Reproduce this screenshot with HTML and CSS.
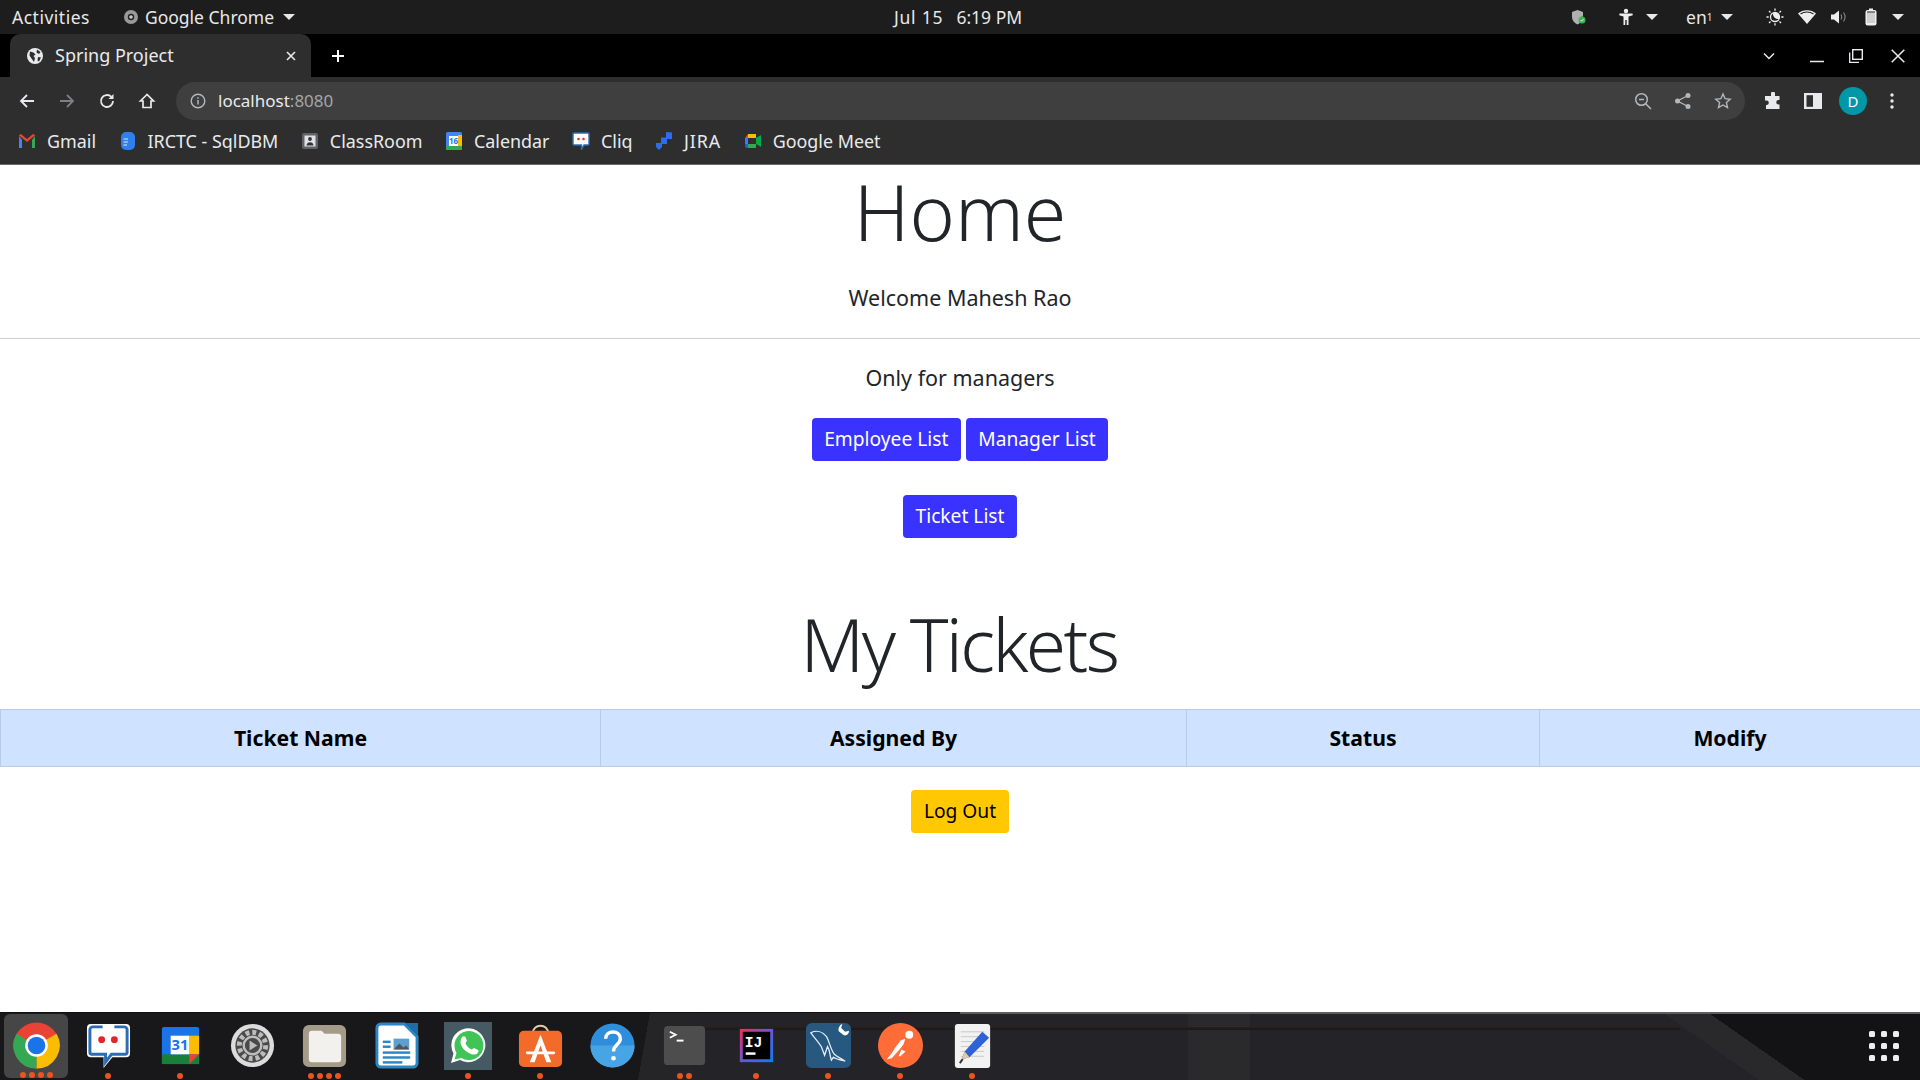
FILE: index.html
```html
<!DOCTYPE html>
<html lang="en">
<head>
<meta charset="utf-8">
<title>Spring Project</title>
<link rel="stylesheet" href="styles.css">
</head>
<body>
<header class="topbar">
  <div class="top-left">
    <span class="activities">Activities</span>
    <span class="app-menu">
      <svg class="i16" viewBox="0 0 16 16"><circle cx="8" cy="8" r="7" fill="#999"/><circle cx="8" cy="8" r="3.2" fill="#222"/><circle cx="8" cy="8" r="1.8" fill="#ccc"/></svg>
      Google Chrome <i class="caret"></i>
    </span>
  </div>
  <div class="top-clock"><span class="date">Jul 15</span><span>6:19 PM</span></div>
  <div class="top-right">
    <svg class="i16 shield" viewBox="0 0 16 16"><path d="M6.500 1l5.500 2v4.500a4 4 0 0 0-3 6.500l-2.500 1.500C3.500 14 1 11.500 1 8V3z" fill="#b0b0b0"/><circle cx="11" cy="11" r="3.500" fill="#3cb554"/><path d="M9.500 11l1.200 1.200 2-2.200" stroke="#fff" stroke-width=".8" fill="none"/></svg>
    <span class="tray-group access">
      <svg class="i18" viewBox="0 0 18 18"><circle cx="9" cy="3" r="2.200" fill="#eee"/><path d="M2.500 5.500h13l.3 1.800-4.300 1.200V17H9.700v-5H8.300v5H6.500V8.500L2.200 7.300z" fill="#eee"/></svg>
      <i class="caret"></i>
    </span>
    <span class="tray-group lang">en<sub>1</sub><i class="caret"></i></span>
    <span class="tray-group status">
      <svg class="i18" viewBox="0 0 18 18"><circle cx="9" cy="9" r="4.500" fill="none" stroke="#eee" stroke-width="1.300"/><path d="M7 5.200a4.500 4.500 0 0 1 6.300 5.500 5 5 0 0 1-6.300-5.500z" fill="#eee"/><path d="M9 .5v2.200M9 15.300v2.200M.5 9h2.200M15.300 9h2.200M3 3l1.500 1.500M13.500 13.500L15 15M3 15l1.500-1.500M13.500 4.500L15 3" stroke="#eee" stroke-width="1.300"/></svg>
      <svg class="i18" viewBox="0 0 18 18"><path d="M0 5.500C4.500 1 13.500 1 18 5.500L9 16z" fill="#eee"/><path d="M2.500 6C6 3.400 12 3.400 15.500 6" stroke="#222" stroke-width="1.100" fill="none"/></svg>
      <svg class="i18" viewBox="0 0 18 18"><path d="M1 6.500h3L9 2.500v13l-5-4H1z" fill="#eee"/><path d="M11 6.500c1 1.500 1 3.500 0 5M13.500 4.500c2 2.800 2 6.200 0 9" stroke="#8a8a8a" stroke-width="1.100" fill="none"/></svg>
      <svg class="i18" viewBox="0 0 18 18"><rect x="3.500" y="2" width="11" height="15.500" rx="2" fill="#eee"/><rect x="7" y="0.500" width="4" height="2" fill="#eee"/><rect x="5" y="3.500" width="8" height="11.500" fill="#cfcfcf"/><rect x="5" y="3.500" width="8" height="1" fill="#333"/></svg>
      <i class="caret"></i>
    </span>
  </div>
</header>

<div class="tabstrip">
  <div class="tab">
    <svg class="i16" viewBox="0 0 16 16"><circle cx="8" cy="8" r="8" fill="#e8eaed"/><path d="M3 3.500l3.500 1 2 2-2 1.500 1.500 2-1 4-2.500-3.500-2-3zM10 1.500l3.500 2.500-1.500 2-2.500-1.500zM11 9l3 .5-2 4-1.500-1z" fill="#2e2e2e"/></svg>
    <span class="tab-title">Spring Project</span>
    <svg class="i12" viewBox="0 0 12 12"><path d="M2 2l8 8M10 2l-8 8" stroke="#e8eaed" stroke-width="1.600"/></svg>
  </div>
  <svg class="i16 newtab" viewBox="0 0 16 16"><path d="M8 2v12M2 8h12" stroke="#fff" stroke-width="2"/></svg>
  <div class="win-controls">
    <svg class="i12 wc-chevron" viewBox="0 0 12 12"><path d="M1 3.500l5 5 5-5" stroke="#e8eaed" stroke-width="1.500" fill="none"/></svg>
    <svg class="i14" viewBox="0 0 14 14"><path d="M0 12.500h14" stroke="#e8eaed" stroke-width="1.500"/></svg>
    <svg class="i14" viewBox="0 0 14 14"><path d="M.7 3.500v9.800h9.300" stroke="#e8eaed" stroke-width="1.300" fill="none"/><rect x="3.700" y=".7" width="9.600" height="9.600" stroke="#e8eaed" stroke-width="1.400" fill="none"/></svg>
    <svg class="i14 wc-close" viewBox="0 0 14 14"><path d="M.7.7l12.600 12.600M13.300.7L.7 13.300" stroke="#e8eaed" stroke-width="1.500"/></svg>
  </div>
</div>

<nav class="toolbar">
  <div class="nav-buttons">
    <svg class="i18" viewBox="0 0 18 18"><path d="M16 9H3M9 3L3 9l6 6" stroke="#e8eaed" stroke-width="1.800" fill="none"/></svg>
    <svg class="i18" viewBox="0 0 18 18"><path d="M2 9h13M9 3l6 6-6 6" stroke="#7d7f82" stroke-width="1.800" fill="none"/></svg>
    <svg class="i18" viewBox="0 0 18 18"><path d="M15 9a6 6 0 1 1-1.800-4.300" stroke="#e8eaed" stroke-width="1.800" fill="none"/><path d="M15.500 2v5h-5z" fill="#e8eaed"/></svg>
    <svg class="i18" viewBox="0 0 18 18"><path d="M9 2.500L2.500 9H5v6.500h8V9h2.500z" stroke="#e8eaed" stroke-width="1.700" fill="none"/></svg>
  </div>
  <div class="omnibox">
    <svg class="i16" viewBox="0 0 16 16"><circle cx="8" cy="8" r="6.800" stroke="#b5b8bb" stroke-width="1.400" fill="none"/><path d="M8 7v4.500M8 4.300v1.500" stroke="#b5b8bb" stroke-width="1.500"/></svg>
    <span class="url"><span class="host">localhost</span>:8080</span>
    <div class="omni-actions">
      <svg class="i18" viewBox="0 0 18 18"><circle cx="7.500" cy="7.500" r="5.800" stroke="#b5b8bb" stroke-width="1.500" fill="none"/><path d="M11.700 11.700L17 17M5 7.500h5" stroke="#b5b8bb" stroke-width="1.500"/></svg>
      <svg class="i18" viewBox="0 0 18 18"><circle cx="14" cy="3.500" r="2.500" fill="#b5b8bb"/><circle cx="14" cy="14.500" r="2.500" fill="#b5b8bb"/><circle cx="3.500" cy="9" r="2.500" fill="#b5b8bb"/><path d="M14 3.500L3.500 9 14 14.500" stroke="#b5b8bb" stroke-width="1.300" fill="none"/></svg>
      <svg class="i18" viewBox="0 0 18 18"><path d="M9 2l2.100 4.700 5.100.5-3.800 3.400 1.100 5L9 13l-4.500 2.600 1.100-5L1.800 7.200l5.100-.5z" stroke="#b5b8bb" stroke-width="1.400" fill="none"/></svg>
    </div>
  </div>
  <div class="tool-actions">
    <svg class="i18" viewBox="0 0 18 18"><path d="M7 1.500a2 2 0 0 1 4 0V4h4.500v4h-1a2.200 2.200 0 0 0 0 4.500h1v4.500H2v-4h1a2.300 2.300 0 0 0 0-4.500H1V4h6z" fill="#e8eaed"/></svg>
    <svg class="i18" viewBox="0 0 18 18"><rect x="0" y="1" width="18" height="16" fill="#e8eaed"/><rect x="2.500" y="3.200" width="6.500" height="11.600" fill="#2e2e2e"/></svg>
    <span class="avatar">D</span>
    <svg class="i18 kebab" viewBox="0 0 18 18"><circle cx="9" cy="3" r="1.700" fill="#e8eaed"/><circle cx="9" cy="9" r="1.700" fill="#e8eaed"/><circle cx="9" cy="15" r="1.700" fill="#e8eaed"/></svg>
  </div>
</nav>

<div class="bookmarks">
  <a class="bm">
    <svg class="i18" viewBox="0 0 18 18"><path d="M1 4v12h3V8z" fill="#4285f4"/><path d="M14 8v8h3V4z" fill="#34a853"/><path d="M1 3.500L9 10l8-6.500V3l-2-1-6 5-6-5-2 1z" fill="#ea4335"/></svg>Gmail
  </a>
  <a class="bm">
    <svg class="i18" viewBox="0 0 18 18"><rect x="2" y="0" width="14" height="18" rx="5" fill="#2f80ed"/><path d="M4.500 7H9M4.500 10H9M4.500 13H8" stroke="#dbe9ff" stroke-width="1.200"/></svg>IRCTC - SqlDBM
  </a>
  <a class="bm">
    <svg class="i18" viewBox="0 0 18 18"><rect x="1" y="1" width="16" height="16" rx="2" fill="#5f6368"/><rect x="3.500" y="3.500" width="11" height="11" fill="#dfe1e3"/><circle cx="9" cy="7" r="1.900" fill="#333"/><path d="M5.500 13.500c0-4.500 7-4.500 7 0z" fill="#333"/></svg>ClassRoom
  </a>
  <a class="bm">
    <svg class="i18" viewBox="0 0 18 18"><rect x="1" y="0" width="16" height="18" rx="1.500" fill="#4285f4"/><rect x="1" y="14" width="16" height="4" fill="#34a853"/><rect x="13" y="3" width="4" height="11" fill="#fbbc04"/><rect x="4" y="4" width="9" height="10" fill="#fff"/><text x="8.500" y="12" class="cal-num">16</text></svg>Calendar
  </a>
  <a class="bm">
    <svg class="i18" viewBox="0 0 18 18"><path d="M2 1h14a1 1 0 0 1 1 1v10a1 1 0 0 1-1 1h-4L9.500 17.500V13H2a1 1 0 0 1-1-1V2a1 1 0 0 1 1-1z" fill="#fff" stroke="#2a6db5" stroke-width="1.400"/><circle cx="6.500" cy="7" r="1.300" fill="#e3342f"/><circle cx="11.500" cy="7" r="1.300" fill="#e3342f"/></svg>Cliq
  </a>
  <a class="bm bm-jira">
    <svg class="i18" viewBox="0 0 18 18"><path d="M11 0l6 .5V7h-6zM6 5.500h6V12H6zM1 11h6v4l-3 3-3-3z" fill="#2f6bf0"/></svg>JIRA
  </a>
  <a class="bm">
    <svg class="i18" viewBox="0 0 18 18"><path d="M4 2h8v4H7L4 6z" fill="#fbbc04"/><path d="M4 2L1 6h3z" fill="#ea4335"/><path d="M1 6h3v6H1z" fill="#2684fc"/><path d="M1 12h3v4H3a2 2 0 0 1-2-2z" fill="#1967d2"/><path d="M4 12h8v4H4z" fill="#34a853"/><path d="M12 6l5-3v12l-5-3z" fill="#00ac47"/><path d="M12 2v4h-2z" fill="#fbbc04"/></svg>Google Meet
  </a>
</div>

<main class="page">
  <h1 class="display home">Home</h1>
  <p class="lead welcome">Welcome Mahesh Rao</p>
  <hr class="rule">
  <p class="lead managers">Only for managers</p>
  <div class="btn-row first">
    <a class="btn primary">Employee List</a>
    <a class="btn primary">Manager List</a>
  </div>
  <div class="btn-row second">
    <a class="btn primary">Ticket List</a>
  </div>
  <h1 class="display tickets">My Tickets</h1>
  <table class="ticket-table">
    <colgroup><col class="c1"><col class="c2"><col class="c3"><col class="c4"></colgroup>
    <thead><tr><th>Ticket Name</th><th>Assigned By</th><th>Status</th><th>Modify</th></tr></thead>
  </table>
  <div class="btn-row logout"><a class="btn warning">Log Out</a></div>
</main>

<footer class="dock">
  <div class="dock-item active">
    <svg class="app" viewBox="0 0 48 48"><circle cx="24" cy="24" r="23.500" fill="#ea4335"/><path d="M24 24L44.400 12A23.500 23.500 0 0 1 24 47.500z" fill="#fbbc04"/><path d="M24 24L24 47.500A23.500 23.500 0 0 1 3.600 12z" fill="#34a853"/><circle cx="24" cy="24" r="11.500" fill="#fff"/><circle cx="24" cy="24" r="9" fill="#1a73e8"/></svg>
    <span class="dots"><i></i><i></i><i></i><i></i></span>
  </div>
  <div class="dock-item">
    <svg class="app" viewBox="0 0 48 48"><path d="M6 2h36a4 4 0 0 1 4 4v26a4 4 0 0 1-4 4H28l-9 11v-11H6a4 4 0 0 1-4-4V6a4 4 0 0 1 4-4z" fill="#fff"/><path d="M18 5H8a3 3 0 0 0-3 3v23a2 2 0 0 0 2 2h14v8l6-8h14a2 2 0 0 0 2-2V8a3 3 0 0 0-3-3H30" fill="none" stroke="#2a6db5" stroke-width="3"/><circle cx="17" cy="18" r="3.500" fill="#e3242b"/><circle cx="30" cy="18" r="3.500" fill="#e3242b"/></svg>
    <span class="dots"><i></i></span>
  </div>
  <div class="dock-item">
    <svg class="app" viewBox="0 0 48 48"><rect x="5" y="5" width="38" height="38" rx="2" fill="#1a73e8"/><rect x="5" y="33" width="38" height="10" fill="#188038"/><rect x="33" y="14" width="10" height="19" fill="#fbbc04"/><rect x="14" y="14" width="19" height="19" fill="#fff"/><path d="M33 33h10L33 43z" fill="#ea4335"/><text x="23.500" y="29" class="dock-cal">31</text></svg>
    <span class="dots"><i></i></span>
  </div>
  <div class="dock-item">
    <svg class="app" viewBox="0 0 48 48"><circle cx="24" cy="24" r="22" fill="#dcdcdc"/><circle cx="24" cy="24" r="17.500" fill="#4a4a4a"/><circle cx="24" cy="24" r="13.500" fill="none" stroke="#bdbdbd" stroke-width="5" stroke-dasharray="4 3"/><circle cx="24" cy="24" r="9" fill="none" stroke="#bdbdbd" stroke-width="2.500"/><path d="M21 19l8 5-8 5z" fill="#bdbdbd"/></svg>
  </div>
  <div class="dock-item">
    <svg class="app" viewBox="0 0 48 48"><rect x="2" y="3" width="44" height="43" rx="6" fill="#a49c88"/><path d="M8 12a3 3 0 0 1 3-3h10l3 3h14a3 3 0 0 1 3 3v23a3 3 0 0 1-3 3H11a3 3 0 0 1-3-3z" fill="#f3f1ee"/></svg>
    <span class="dots"><i></i><i></i><i></i><i></i></span>
  </div>
  <div class="dock-item">
    <svg class="app" viewBox="0 0 48 48"><path d="M8 2h24l13 13v27a4 4 0 0 1-4 4H8a4 4 0 0 1-4-4V6a4 4 0 0 1 4-4z" fill="#fff" stroke="#2b86c5" stroke-width="3"/><path d="M33 1l13 13V1z" fill="#1c6ea4"/><rect x="10" y="19" width="8" height="2.500" fill="#2b86c5"/><rect x="10" y="24" width="8" height="2.500" fill="#2b86c5"/><rect x="21" y="17" width="16" height="11" fill="#5d9fd2"/><path d="M21 28l6-6 4 4 3-2 3 4z" fill="#555"/><rect x="10" y="30" width="28" height="2.500" fill="#2b86c5"/><rect x="10" y="35" width="28" height="2.500" fill="#2b86c5"/><rect x="10" y="40" width="20" height="2.500" fill="#2b86c5"/></svg>
  </div>
  <div class="dock-item">
    <span class="wa-box">
      <svg class="app" viewBox="0 0 48 48"><path d="M7 41l2.500-9.500a17 17 0 1 1 6.500 6.500z" fill="#fff"/><path d="M10.500 37.500l2-6.500a14.500 14.500 0 1 1 5 5z" fill="#3fc455"/><path d="M18 15c1-1 3-1 3.500 0l1.300 3.500c.2.800-1.300 1.800-1.300 2.800 1 2.700 3.500 5.200 6.200 6.200 1 0 1.800-1.800 2.800-1.300l3.500 1.800c1 .5.500 2.200-.5 3.200-1.800 1.800-4.500 1.800-7 .5-4.500-1.800-8.500-5.800-9.800-9.800-.6-2.700.5-5.400 1.300-6.900z" fill="#fff"/></svg>
    </span>
    <span class="dots"><i></i></span>
  </div>
  <div class="dock-item">
    <svg class="app" viewBox="0 0 48 48"><path d="M16 12c0-11 16-11 16 0" fill="none" stroke="#e5c9a5" stroke-width="2"/><rect x="2" y="9" width="44" height="37" rx="5" fill="#f26b2b"/><path d="M24 13L13 41h5l6-17 6 17h5z" fill="#fff"/><rect x="9" y="30" width="30" height="3" rx="1.500" fill="#fff"/></svg>
    <span class="dots"><i></i></span>
  </div>
  <div class="dock-item">
    <svg class="app" viewBox="0 0 48 48"><circle cx="24" cy="24" r="22.500" fill="#2f8edb"/><path d="M1.500 24a22.500 22.500 0 0 0 45 0z" fill="#47a5e6"/><path d="M17 17c0-9 15-9 15 0 0 6-7 6-7 13" fill="none" stroke="#fff" stroke-width="3.500"/><circle cx="25" cy="37" r="2.400" fill="#fff"/></svg>
  </div>
  <div class="dock-item">
    <svg class="app" viewBox="0 0 48 48"><rect x="3" y="4" width="42" height="40" rx="4" fill="#4d4d4d"/><path d="M9 10l6 3-6 3" fill="none" stroke="#fff" stroke-width="1.800"/><path d="M16 19h7" stroke="#fff" stroke-width="2"/></svg>
    <span class="dots"><i></i><i></i></span>
  </div>
  <div class="dock-item">
    <svg class="app" viewBox="0 0 48 48"><defs><linearGradient id="ij" x1="0" y1="0" x2="1" y2="1"><stop offset="0" stop-color="#fe2857"/><stop offset=".5" stop-color="#6b57d2"/><stop offset="1" stop-color="#087cfa"/></linearGradient></defs><rect x="7" y="7" width="34" height="34" fill="url(#ij)"/><rect x="10" y="10" width="28" height="28" fill="#000"/><text x="12" y="26" class="ij">IJ</text><rect x="13" y="31" width="10" height="2.500" fill="#fff"/></svg>
    <span class="dots"><i></i></span>
  </div>
  <div class="dock-item">
    <svg class="app" viewBox="0 0 48 48"><rect x="1" y="1" width="46" height="46" rx="6" fill="#27587f"/><path d="M6 11c6-3 12-1 16 4 3 5 4 13 8 18 3 3 7 4 11 7-4-1-9-2-12-4l-2 3c-2-5-1-9-4-14l-3 9-3-8c-2-4-6-8-11-15z" fill="none" stroke="#e6eef5" stroke-width="1.300"/><path d="M38 2l-1 4 4 4 4-1c0 4-4 6-6 4l-4-3c-2-2 0-7 3-8z" fill="#fff"/></svg>
    <span class="dots"><i></i></span>
  </div>
  <div class="dock-item">
    <svg class="app" viewBox="0 0 48 48"><circle cx="24" cy="24" r="23" fill="#ff6c37"/><path d="M10 38l5-1 8-9 4-5 2-6-5 2-6 8-3 5z" fill="#fff"/><path d="M25 28l4 2-5 5-2 0z" fill="#fff"/><circle cx="33" cy="13" r="4" fill="#fff"/></svg>
    <span class="dots"><i></i></span>
  </div>
  <div class="dock-item">
    <svg class="app" viewBox="0 0 48 48"><rect x="6" y="2" width="36" height="45" rx="3" fill="#f2f2f2"/><path d="M12 10h24M12 15h24M12 20h24M12 25h24M12 30h24M12 35h24" stroke="#c9c9c9" stroke-width="1"/><path d="M34 10l7 6-20 20-8 2 3-8z" fill="#2f62d6"/><path d="M13 38l3-8 5 6z" fill="#e7c9a0"/><path d="M11 42l3-4" stroke="#333" stroke-width="2"/></svg>
    <span class="dots"><i></i></span>
  </div>
  <div class="app-grid">
    <i></i><i></i><i></i><i></i><i></i><i></i><i></i><i></i><i></i>
  </div>
</footer>
</body>
</html>
```

FILE: styles.css
```css
* { box-sizing: border-box; }
html, body { margin: 0; height: 100%; }
body {
  display: flex;
  flex-direction: column;
  height: 1080px;
  overflow: hidden;
  font-family: "Noto Sans", "Open Sans", sans-serif;
  background: #fff;
  color: #212529;
}
svg { display: block; flex: none; }
.i12 { width: 12px; height: 12px; }
.i14 { width: 14px; height: 14px; }
.i16 { width: 16px; height: 16px; }
.i18 { width: 18px; height: 18px; }

/* GNOME top bar */
.topbar {
  height: 34px;
  background: #1d1d1d;
  color: #e8e8e8;
  font-size: 17.500px;
  display: grid;
  grid-template-columns: 1fr auto 1fr;
  align-items: center;
  padding: 0 16px 0 12px;
  flex: none;
}
.top-left { display: flex; align-items: center; gap: 33px; }
.activities { letter-spacing: .5px; }
.app-menu { display: flex; align-items: center; gap: 6px; }
.top-clock { display: flex; gap: 13px; }
.date { letter-spacing: .8px; }
.top-right { display: flex; align-items: center; justify-content: flex-end; }
.caret {
  display: inline-block;
  width: 0;
  height: 0;
  border-left: 6px solid transparent;
  border-right: 6px solid transparent;
  border-top: 6px solid #e8e8e8;
  margin-left: 3px;
}
.shield { margin-right: 30px; }
.tray-group { display: flex; align-items: center; }
.access { gap: 8.500px; margin-right: 28px; }
.lang { margin-right: 33px; }
.lang .caret { margin-left: 8.500px; }
.lang sub { font-size: 10px; line-height: 1; align-self: flex-end; margin-bottom: 7px; }
.status { gap: 14px; }
.status .caret { margin-left: -2px; }

/* Chrome tab strip */
.tabstrip {
  height: 43px;
  background: #000;
  display: flex;
  align-items: center;
  padding-left: 10px;
  flex: none;
}
.tab {
  width: 301px;
  height: 43px;
  background: #2e2e2e;
  border-radius: 10px 10px 0 0;
  color: #e8eaed;
  font-size: 18px;
  display: flex;
  align-items: center;
  padding: 0 14px 0 17px;
  gap: 11px;
}
.tab-title { flex: 1; margin: 0 0 2px 1px; }
.newtab { margin-left: 19px; }
.win-controls {
  margin-left: auto;
  display: flex;
  align-items: center;
  gap: 25px;
  padding-right: 15px;
}
.wc-chevron { margin-right: 10px; }
.wc-close { margin-left: 3px; }

/* Chrome toolbar */
.toolbar {
  height: 43px;
  background: #2e2e2e;
  display: flex;
  align-items: flex-start;
  padding-top: 5px;
  flex: none;
}
.nav-buttons {
  width: 176px;
  height: 38px;
  display: flex;
  align-items: center;
  gap: 22px;
  padding-left: 18px;
}
.omnibox {
  width: 1569px;
  height: 38px;
  border-radius: 19px;
  background: #3f3f3f;
  display: flex;
  align-items: center;
  padding: 0 13px 0 14px;
  gap: 12px;
  font-size: 17px;
  color: #a3a6a9;
}
.url { margin-bottom: 2px; }
.host { color: #e8eaed; }
.omni-actions { margin-left: auto; display: flex; gap: 22px; align-items: center; }
.tool-actions {
  flex: 1;
  height: 38px;
  display: flex;
  align-items: center;
  gap: 22px;
  padding-left: 19px;
}
.avatar {
  width: 28px;
  height: 28px;
  border-radius: 50%;
  background: #0097a7;
  color: #fff;
  font-size: 15px;
  display: flex;
  align-items: center;
  justify-content: center;
  margin: 0 -4px 0 -5px;
  flex: none;
}
.kebab { margin-left: -2px; }

/* Bookmarks */
.bookmarks {
  height: 45px;
  background: #2e2e2e;
  border-bottom: 1px solid #6a6a6a;
  display: flex;
  align-items: center;
  padding: 0 0 2px 18px;
  gap: 22.500px;
  color: #e8eaed;
  font-size: 17.900px;
  flex: none;
}
.bm { display: flex; align-items: center; gap: 11px; }
.bm-jira { letter-spacing: .9px; }
.cal-num { font: 700 8px "Noto Sans", sans-serif; fill: #1a73e8; text-anchor: middle; letter-spacing: 0; }

/* Page */
.page {
  flex: 1;
  min-height: 0;
  text-align: center;
  background: #fff;
}
.display {
  margin: 0;
  font-weight: 300;
  line-height: 86px;
}
.home { font-size: 77px; padding-top: 4px; }
.lead { margin: 0; font-size: 21.500px; line-height: 30px; }
.welcome { margin-top: 28px; }
.rule { border: 0; height: 1px; background: #cfcfcf; margin: 25px 0 0; }
.managers { margin-top: 24px; }
.btn-row { display: flex; justify-content: center; gap: 5px; }
.btn-row.first { margin-top: 25px; }
.btn-row.second { margin-top: 34px; }
.btn {
  display: block;
  height: 43px;
  line-height: 42px;
  padding: 0 12.500px;
  border-radius: 4px;
  font-size: 19.200px;
}
.primary { background: #3a33ff; color: #fff; }
.warning { background: #ffc800; color: #000; }
.tickets {
  font-size: 73px;
  letter-spacing: -2.600px;
  margin-top: 63px;
  padding-right: 2px;
}
.ticket-table {
  width: 100%;
  border-collapse: collapse;
  table-layout: fixed;
  margin-top: 22px;
}
.c1 { width: 600px; }
.c2 { width: 586px; }
.c3 { width: 353px; }
.c4 { width: 381px; }
.ticket-table th {
  height: 57px;
  padding: 0 0 2px;
  background: #cfe2ff;
  border: 1px solid #bacbe6;
  color: #000;
  font-size: 21.200px;
  font-weight: 700;
  text-align: center;
}
.btn-row.logout { margin-top: 23px; }

/* Dock with its wooden wallpaper */
.dock {
  height: 68px;
  flex: none;
  display: flex;
  align-items: flex-start;
  position: relative;
  border-top: 1px solid #111;
  background-color: #242428;
  background-image:
    linear-gradient(#2a1f1d, #1b1817),
    linear-gradient(90deg, transparent 1188px, #2a2a2c 1188px 1250px, transparent 1250px),
    linear-gradient(35deg, transparent 1009px, #29292c 1009px 1035px, #131315 1035px),
    linear-gradient(100deg, #18181a 0 640px, #252528 640px 690px, transparent 690px);
  background-size: 980px 3px, auto, auto, auto;
  background-position: 700px 14px, 0 0, 0 0, 0 0;
  background-repeat: no-repeat;
}
.dock::before {
  content: "";
  position: absolute;
  top: -1px;
  right: 0;
  width: 960px;
  height: 2px;
  background: #5e5e5e;
}
.dock-item {
  width: 72px;
  height: 67px;
  display: flex;
  flex-direction: column;
  align-items: center;
  padding-top: 9px;
  position: relative;
  flex: none;
}
.dock-item .app { width: 47px; height: 47px; }
.dock-item.active {
  background: rgba(255,255,255,.2);
  border-radius: 6px;
  width: 64px;
  height: 64px;
  margin: 1px 4px 0 4px;
  padding-top: 8px;
}
.dots {
  position: absolute;
  bottom: 1px;
  left: 0;
  right: 0;
  display: flex;
  justify-content: center;
  gap: 3px;
}
.dock-item.active .dots { bottom: 0; }
.dots i { width: 6px; height: 6px; border-radius: 50%; background: #e95420; }
.wa-box {
  display: block;
  width: 48px;
  height: 48px;
  background: #465a63;
}
.wa-box .app { width: 48px; height: 48px; }
.dock-cal { font: 700 15px "Noto Sans", sans-serif; fill: #1a73e8; text-anchor: middle; }
.ij { font: 700 15px "Liberation Mono", monospace; fill: #fff; }
.app-grid {
  margin-left: auto;
  margin-top: 18px;
  margin-right: 21px;
  display: grid;
  grid-template-columns: repeat(3, 6px);
  grid-auto-rows: 6px;
  gap: 6px;
}
.app-grid i { background: #eee; border-radius: 1.500px; }
```
